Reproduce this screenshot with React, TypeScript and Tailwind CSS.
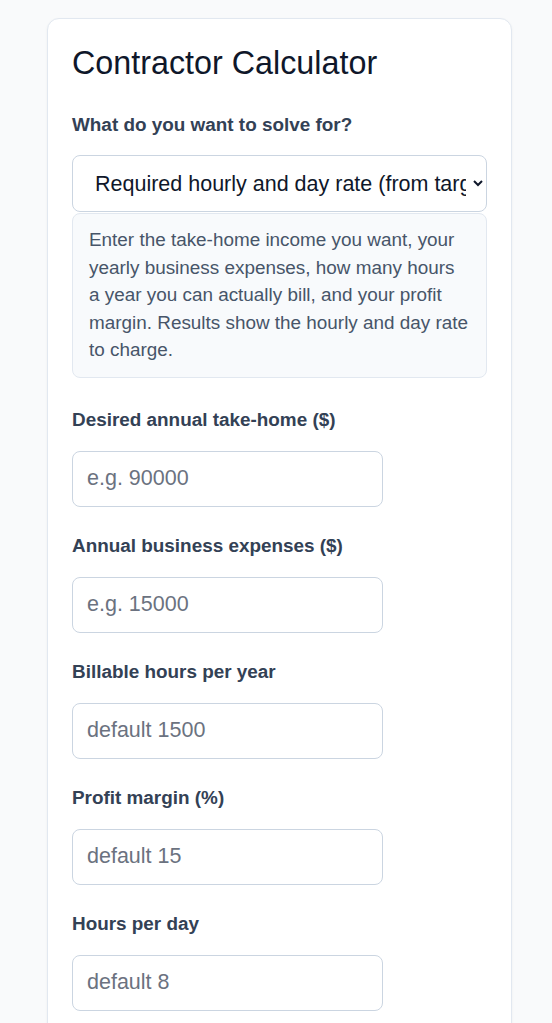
import React from 'react';

const fields = [
  { label: 'Desired annual take-home ($)', placeholder: 'e.g. 90000' },
  { label: 'Annual business expenses ($)', placeholder: 'e.g. 15000' },
  { label: 'Billable hours per year', placeholder: 'default 1500' },
  { label: 'Profit margin (%)', placeholder: 'default 15' },
  { label: 'Hours per day', placeholder: 'default 8' },
];

export default function App() {
  return (
    <div
      className="min-h-screen bg-[#f9fafb] pt-[18px] pl-[47px] pb-10 text-[#1e293b]"
      style={{ fontFamily: '"Liberation Sans", Arial, sans-serif' }}
    >
      <div className="w-[465px] rounded-xl border border-[#e2e8f0] bg-white px-6 pt-[25px] pb-6 shadow-[0_1px_3px_rgba(15,23,42,0.05)]">
        <h1 className="text-[32.3px] leading-[38px] font-normal text-[#0f172a]">Contractor Calculator</h1>

        <label className="mt-[32px] block text-[18.9px] leading-[22px] font-bold text-[#334155]">
          What do you want to solve for?
        </label>
        <select
          defaultValue="rate"
          className="mt-[19px] block h-[57px] w-full rounded-lg border border-[#cbd5e1] bg-white pl-[18px] pr-1 text-[21.5px] text-[#0f172a]"
        >
          <option value="rate">Required hourly and day rate (from target income)</option>
          <option value="income">Take-home income (from rate)</option>
        </select>
        <div className="mt-px rounded-lg border border-[#e2e8f0] bg-[#f8fafc] px-4 pt-[12px] pb-[13px] text-[18.9px] leading-[27.5px] whitespace-pre-line text-[#475569]">
          {'Enter the take-home income you want, your\nyearly business expenses, how many hours\na year you can actually bill, and your profit\nmargin. Results show the hourly and day rate\nto charge.'}
        </div>

        <div className="mt-[31px] flex flex-col gap-[28px]">
          {fields.map((f) => (
            <div key={f.label}>
              <label className="block text-[18.9px] leading-[22px] font-bold text-[#334155]">{f.label}</label>
              <input
                type="text"
                placeholder={f.placeholder}
                className="mt-[20px] block h-[56px] w-[311px] rounded-lg border border-[#cbd5e1] bg-white px-[14px] text-[21.5px] text-[#0f172a] placeholder:text-[#6b7280]"
              />
            </div>
          ))}
        </div>
      </div>
    </div>
  );
}
